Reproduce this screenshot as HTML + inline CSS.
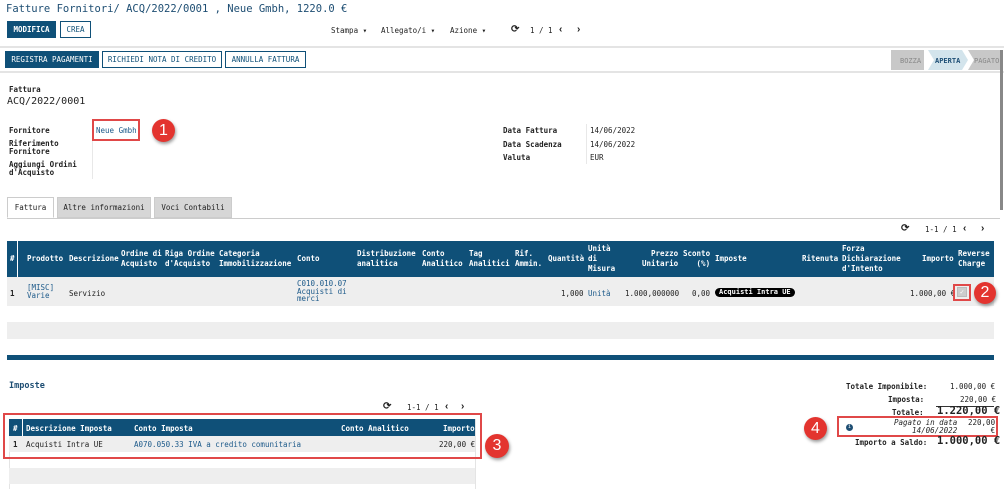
<!DOCTYPE html>
<html><head><meta charset="utf-8"><style>
*{margin:0;padding:0;box-sizing:border-box}
body{width:1004px;height:489px;background:#fff;position:relative;overflow:hidden;font-family:"DejaVu Sans Mono","Liberation Mono",monospace;font-size:7.5px;color:#222}
.a{position:absolute;white-space:nowrap}
.b{font-weight:bold}
.blue{color:#1d5a8a}
.btn{position:absolute;height:17px;border:1px solid #0f5078;color:#0f5078;font-size:7.5px;display:flex;align-items:center;justify-content:center;background:#fff}
.btnp{background:#0f5078;color:#fff;font-weight:bold}
.hdr{position:absolute;background:#0f5078;color:#fff;font-weight:bold}
.c{position:absolute;border-radius:50%;background:#e3342f;color:#fff;font-family:"Liberation Sans",sans-serif;font-size:16px;display:flex;align-items:center;justify-content:center;box-shadow:1px 2px 3px rgba(0,0,0,.4)}
.rb{position:absolute;border:2px solid #e04848}
.tab{position:absolute;top:197px;height:21px;border:1px solid #ccc;background:#d6d6d6;display:flex;align-items:center;justify-content:center;font-size:7.5px}
.ch{font-family:"Liberation Sans",sans-serif;font-weight:bold;font-size:10px}
</style></head><body>
<div class="a" style="left:6px;top:3px;font-size:10.5px;color:#1e4e73">Fatture Fornitori/  ACQ/2022/0001 , Neue Gmbh, 1220.0 €</div>
<div class="btn btnp" style="left:7px;top:21px;width:49px">MODIFICA</div>
<div class="btn" style="left:60px;top:21px;width:31px">CREA</div>
<div class="a" style="left:331px;top:26px">Stampa ▾</div>
<div class="a" style="left:381px;top:26px">Allegato/i ▾</div>
<div class="a" style="left:450px;top:26px">Azione ▾</div>
<div class="a b" style="left:511px;top:24px;font-size:10px">⟳</div>
<div class="a" style="left:530px;top:26px">1 / 1</div>
<div class="a ch" style="left:559px;top:24px">‹</div>
<div class="a ch" style="left:577px;top:24px">›</div>
<div class="a" style="left:0;top:46px;width:1004px;height:2px;background:#e4e4e4"></div>
<div class="btn btnp" style="left:5px;top:51px;width:94px;font-weight:normal">REGISTRA PAGAMENTI</div>
<div class="btn" style="left:102px;top:51px;width:120px">RICHIEDI NOTA DI CREDITO</div>
<div class="btn" style="left:225px;top:51px;width:81px">ANNULLA FATTURA</div>
<svg class="a" style="left:890px;top:50px" width="112" height="20">
<path d="M1 0H34V20H1Z" fill="#c8c8c8"/>
<path d="M38 0H72L78 10L72 20H38L44 10Z" fill="#d3e4ec"/>
<path d="M78 0H112V20H78L84 10Z" fill="#c8c8c8"/>
<text x="10" y="13" font-size="7" fill="#888" font-family="DejaVu Sans Mono">BOZZA</text>
<text x="45" y="13" font-size="7" fill="#1d4e75" font-weight="bold" font-family="DejaVu Sans Mono">APERTA</text>
<text x="84" y="13" font-size="7" fill="#888" font-family="DejaVu Sans Mono">PAGATO</text>
</svg>
<div class="a" style="left:0;top:71px;width:1004px;height:2px;background:#e4e4e4"></div>
<div class="a" style="left:1000px;top:50px;width:3px;height:160px;background:#888"></div>

<div class="a b" style="left:9px;top:85px">Fattura</div>
<div class="a" style="left:7px;top:96px;font-size:10px">ACQ/2022/0001</div>
<div class="a b" style="left:9px;top:126px">Fornitore</div>
<div class="a b" style="left:9px;top:140px;line-height:7.5px">Riferimento<br>Fornitore</div>
<div class="a b" style="left:9px;top:161px;line-height:7.5px">Aggiungi Ordini<br>d'Acquisto</div>
<div class="a" style="left:92px;top:119px;width:1px;height:60px;background:#e8e8e8"></div>
<div class="rb" style="left:92px;top:119px;width:48px;height:22px"></div>
<div class="a blue" style="left:96px;top:126px">Neue Gmbh</div>
<div class="c" style="left:152px;top:119px;width:23px;height:23px">1</div>
<div class="a b" style="left:503px;top:126px">Data Fattura</div>
<div class="a b" style="left:503px;top:140px">Data Scadenza</div>
<div class="a b" style="left:503px;top:153px">Valuta</div>
<div class="a" style="left:586px;top:124px;width:1px;height:40px;background:#e8e8e8"></div>
<div class="a" style="left:590px;top:126px">14/06/2022</div>
<div class="a" style="left:590px;top:140px">14/06/2022</div>
<div class="a" style="left:590px;top:153px">EUR</div>

<div class="a" style="left:7px;top:218px;width:993px;height:1px;background:#ccc"></div>
<div class="tab" style="left:7px;width:47px;background:#fff;border-bottom-color:#fff">Fattura</div>
<div class="tab" style="left:57px;width:94px">Altre informazioni</div>
<div class="tab" style="left:154px;width:78px">Voci Contabili</div>
<div class="a b" style="left:901px;top:223px;font-size:10px">⟳</div>
<div class="a" style="left:925px;top:225px">1-1 / 1</div>
<div class="a ch" style="left:963px;top:223px">‹</div>
<div class="a ch" style="left:981px;top:223px">›</div>

<div class="hdr" style="left:7px;top:241px;width:987px;height:36px"></div>
<div class="a" style="left:17px;top:241px;width:1px;height:36px;background:#fff"></div>
<div class="a b" style="left:7px;top:241px;width:987px;height:36px;color:#fff;line-height:10px">
<span class="a" style="left:3px;top:13px">#</span>
<span class="a" style="left:20px;top:13px">Prodotto</span>
<span class="a" style="left:62px;top:13px">Descrizione</span>
<span class="a" style="left:114px;top:8px">Ordine di<br>Acquisto</span>
<span class="a" style="left:158px;top:8px">Riga Ordine<br>d'Acquisto</span>
<span class="a" style="left:212px;top:8px">Categoria<br>Immobilizzazione</span>
<span class="a" style="left:290px;top:13px">Conto</span>
<span class="a" style="left:350px;top:8px">Distribuzione<br>analitica</span>
<span class="a" style="left:415px;top:8px">Conto<br>Analitico</span>
<span class="a" style="left:462px;top:8px">Tag<br>Analitici</span>
<span class="a" style="left:508px;top:8px">Rif.<br>Ammin.</span>
<span class="a" style="left:541px;top:13px">Quantità</span>
<span class="a" style="left:581px;top:3px">Unità<br>di<br>Misura</span>
<span class="a" style="left:635px;top:8px;text-align:right">&nbsp;Prezzo<br>Unitario</span>
<span class="a" style="left:676px;top:8px;text-align:right">Sconto<br>&nbsp;&nbsp;&nbsp;(%)</span>
<span class="a" style="left:708px;top:13px">Imposte</span>
<span class="a" style="left:795px;top:13px">Ritenuta</span>
<span class="a" style="left:835px;top:3px">Forza<br>Dichiarazione<br>d'Intento</span>
<span class="a" style="left:915px;top:13px">Importo</span>
<span class="a" style="left:951px;top:8px">Reverse<br>Charge</span>
</div>
<div class="a" style="left:7px;top:277px;width:987px;height:29px;background:#eee"></div>
<div class="a" style="left:7px;top:322px;width:987px;height:17px;background:#eee"></div>
<div class="a" style="left:7px;top:355px;width:987px;height:5px;background:#0f5078"></div>
<div class="a b" style="left:10px;top:289px">1</div>
<div class="a blue" style="left:27px;top:284px;line-height:8px">[MISC]<br>Varie</div>
<div class="a" style="left:69px;top:289px">Servizio</div>
<div class="a blue" style="left:297px;top:280px;line-height:7.5px">C010.010.07<br>Acquisti di<br>merci</div>
<div class="a" style="left:561px;top:289px">1,000</div>
<div class="a blue" style="left:588px;top:289px">Unità</div>
<div class="a" style="left:625px;top:289px">1.000,000000</div>
<div class="a" style="left:692px;top:289px">0,00</div>
<div class="a b" style="left:715px;top:288px;background:#000;color:#fff;border-radius:5px;padding:0 4px;font-size:7px;line-height:9px">Acquisti Intra UE</div>
<div class="a" style="left:910px;top:289px">1.000,00 €</div>
<div class="rb" style="left:953px;top:284px;width:18px;height:17px"></div>
<div class="a" style="left:957px;top:287px;width:10px;height:10px;background:#ccc;border:1px solid #bbb;color:#fff;font-size:7px;line-height:8px;text-align:center">✓</div>
<div class="c" style="left:974px;top:282px;width:22px;height:22px">2</div>

<div class="a b blue" style="left:9px;top:381px;font-size:8.5px;color:#1e4e73">Imposte</div>
<div class="a b" style="left:383px;top:401px;font-size:10px">⟳</div>
<div class="a" style="left:407px;top:403px">1-1 / 1</div>
<div class="a ch" style="left:445px;top:401px">‹</div>
<div class="a ch" style="left:461px;top:401px">›</div>
<div class="a" style="left:9px;top:419px;width:1px;height:70px;background:#e4e4e4"></div>
<div class="a" style="left:475px;top:419px;width:1px;height:70px;background:#e4e4e4"></div>
<div class="hdr" style="left:9px;top:419px;width:466px;height:17px"></div>
<div class="a" style="left:22px;top:419px;width:1px;height:17px;background:#fff"></div>
<div class="a b" style="left:13px;top:424px;color:#fff">#</div>
<div class="a b" style="left:26px;top:424px;color:#fff">Descrizione Imposta</div>
<div class="a b" style="left:134px;top:424px;color:#fff">Conto Imposta</div>
<div class="a b" style="left:341px;top:424px;color:#fff">Conto Analitico</div>
<div class="a b" style="left:443px;top:424px;color:#fff">Importo</div>
<div class="a" style="left:9px;top:436px;width:466px;height:16px;background:#eee"></div>
<div class="a b" style="left:13px;top:440px">1</div>
<div class="a" style="left:26px;top:440px">Acquisti Intra UE</div>
<div class="a blue" style="left:134px;top:440px">A070.050.33 IVA a credito comunitaria</div>
<div class="a" style="left:439px;top:440px">220,00 €</div>
<div class="a" style="left:9px;top:468px;width:466px;height:16px;background:#eee"></div>
<div class="rb" style="left:3px;top:413px;width:479px;height:46px"></div>
<div class="c" style="left:485px;top:434px;width:24px;height:24px">3</div>

<div class="a b" style="left:846px;top:382px">Totale Imponibile:</div>
<div class="a" style="left:950px;top:382px">1.000,00 €</div>
<div class="a b" style="left:888px;top:395px">Imposta:</div>
<div class="a" style="left:960px;top:395px">220,00 €</div>
<div class="a" style="left:936px;top:406px;width:58px;height:1px;background:#333"></div>
<div class="a b" style="left:892px;top:408px">Totale:</div>
<div class="a b" style="left:937px;top:405px;font-size:10.5px">1.220,00 €</div>
<div class="rb" style="left:837px;top:416px;width:161px;height:21px"></div>
<div class="a" style="left:846px;top:424px;width:7px;height:7px;border-radius:50%;background:#1e4e73;color:#fff;font-size:5px;text-align:center;line-height:7px">i</div>
<div class="a" style="left:894px;top:419px;font-style:italic;text-align:right;line-height:8px">Pagato in data<br>&nbsp;&nbsp;&nbsp;&nbsp;14/06/2022</div>
<div class="a" style="left:968px;top:419px;text-align:right;line-height:8px">220,00<br>&nbsp;&nbsp;&nbsp;&nbsp;&nbsp;€</div>
<div class="c" style="left:804px;top:417px;width:23px;height:23px">4</div>
<div class="a b" style="left:855px;top:438px">Importo a Saldo:</div>
<div class="a b" style="left:937px;top:435px;font-size:10.5px">1.000,00 €</div>
</body></html>
